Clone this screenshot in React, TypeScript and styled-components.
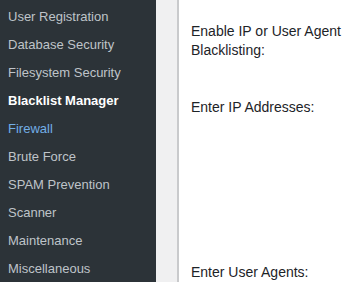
import styled, { createGlobalStyle } from 'styled-components';

const GlobalStyle = createGlobalStyle`
  html, body {
    margin: 0;
    padding: 0;
    height: 100%;
    overflow: hidden;
    background: #f0f0f1;
  }
  #root {
    height: 100%;
  }
`;

const Page = styled.div({
  display: 'flex',
  height: '282px',
  fontFamily: '"Liberation Sans", Arial, sans-serif',
});

const Submenu = styled.ul({
  width: '156px',
  flexShrink: 0,
  margin: 0,
  padding: '3px 0 0',
  listStyle: 'none',
  backgroundColor: '#2c3338',
});

const SubmenuItem = styled.li<{ $state?: 'current' | 'hover' }>(({ $state }) => ({
  padding: '5px 8px',
  fontSize: '13px',
  lineHeight: '18px',
  whiteSpace: 'nowrap',
  color: $state === 'current' ? '#ffffff' : $state === 'hover' ? '#72aee6' : '#bfc4c9',
  fontWeight: $state === 'current' ? 700 : 400,
}));

const Gutter = styled.div({
  width: '21px',
  flexShrink: 0,
  backgroundColor: '#f0f0f1',
});

const Panel = styled.div({
  flex: 1,
  minWidth: 0,
  backgroundColor: '#ffffff',
  borderLeft: '2px solid #c9cacc',
  paddingLeft: '12px',
  overflow: 'hidden',
});

const FormRow = styled.div<{ $top: number }>(({ $top }) => ({
  paddingTop: `${$top}px`,
}));

const Label = styled.div({
  width: '200px',
  fontSize: '14px',
  lineHeight: '19px',
  color: '#1d2327',
});

const menu = [
  'User Registration',
  'Database Security',
  'Filesystem Security',
  'Blacklist Manager',
  'Firewall',
  'Brute Force',
  'SPAM Prevention',
  'Scanner',
  'Maintenance',
  'Miscellaneous',
];

export default function App() {
  return (
    <>
      <GlobalStyle />
      <Page>
        <Submenu>
          {menu.map((item) => (
            <SubmenuItem
              key={item}
              $state={item === 'Blacklist Manager' ? 'current' : item === 'Firewall' ? 'hover' : undefined}
            >
              {item}
            </SubmenuItem>
          ))}
        </Submenu>
        <Gutter />
        <Panel>
          <FormRow $top={22}>
            <Label>Enable IP or User Agent Blacklisting:</Label>
          </FormRow>
          <FormRow $top={38}>
            <Label>Enter IP Addresses:</Label>
          </FormRow>
          <FormRow $top={146}>
            <Label>Enter User Agents:</Label>
          </FormRow>
        </Panel>
      </Page>
    </>
  );
}
